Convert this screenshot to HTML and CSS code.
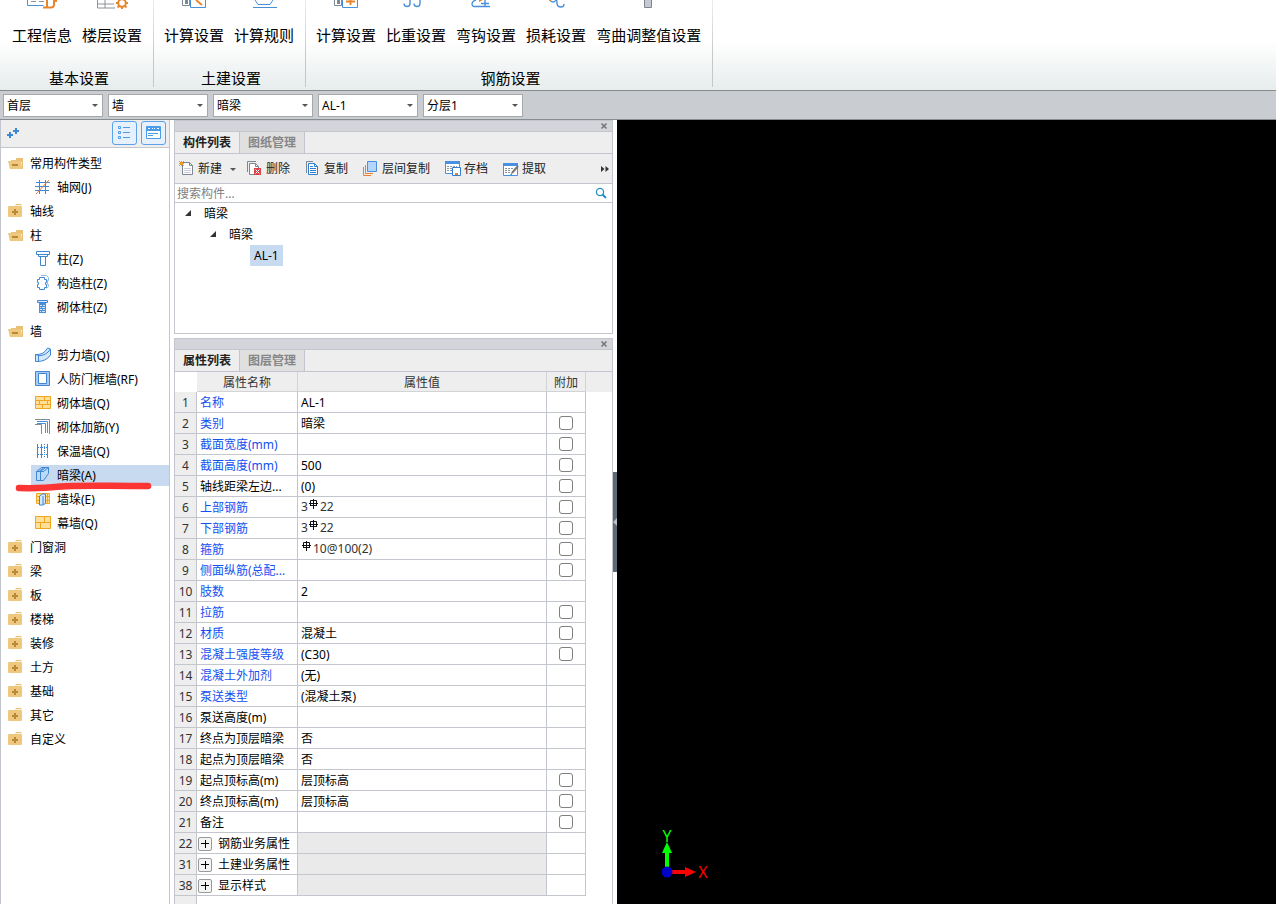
FILE: index.html
```html
<!DOCTYPE html>
<html lang="zh-CN">
<head>
<meta charset="utf-8">
<title>构件定义</title>
<link rel="stylesheet" href="styles.css">
</head>
<body>
<svg class="sprite" aria-hidden="true">
  <symbol id="folder-open" viewBox="0 0 16 14"><path d="M8 2h7v2H8zM3 4h12v9h-1V6H3z" fill="#e9c176"/><path d="M0 5h13l1.500 8H2z" fill="#efc87f"/><path d="M4 8h6v2H4z" fill="#b98a35"/></symbol>
  <symbol id="folder" viewBox="0 0 16 14"><path d="M8 0h5l1 1.300H7z" fill="#e9c176"/><rect x="0" y="2" width="14" height="11" rx="1" fill="#efc87f"/><path d="M6 5h2v2h2v2H8v2H6V9H4V7h2z" fill="#b98a35"/></symbol>
  <symbol id="rebar" viewBox="0 0 11 10"><path d="M5.500 0v10M2.500 1.500h6M2.500 1.500v5M8.500 1.500v5M1 4.500h9M2 6.500h7" fill="none" stroke="#111" stroke-width="1"/></symbol>
  <symbol id="close" viewBox="0 0 8 8"><path d="M1.500 1.500l5 5M6.500 1.500l-5 5" stroke="#777" stroke-width="1.600"/></symbol>
  <symbol id="expander" viewBox="0 0 8 8"><path d="M7 0v6H1z" fill="#333"/></symbol>
</svg>

<header class="ribbon">
  <section class="group">
    <div class="items">
      <button class="tool"><svg viewBox="-17 0 34 10"><path d="M-14.500 0v5.500h16" fill="none" stroke="#4a90d9"/><path d="M-11 1.500h5M-3 1.500h5" stroke="#8a949c"/><path d="M5 0v7M1 7.500h8q3 0 3-3V1h3" fill="none" stroke="#e8862e" stroke-width="2"/></svg>工程信息</button>
      <button class="tool"><svg viewBox="-17 0 34 10"><path d="M-14.500 0v8H3M-14.500 4H2M-7 0v8" fill="none" stroke="#8a949c"/><circle cx="10" cy="3" r="3.800" fill="none" stroke="#e8862e" stroke-width="2"/><path d="M4 3h2M14 3h2M10 7v2M5.500 7.500l2-2M14.500 7.500l-2-2" stroke="#e8862e" stroke-width="2"/></svg>楼层设置</button>
    </div>
    <h2>基本设置</h2>
  </section>
  <section class="group">
    <div class="items">
      <button class="tool"><svg viewBox="-17 0 34 10"><path d="M-11.500 0v5.500h7V0" fill="none" stroke="#7c8790"/><path d="M-9 0h3v4h-3z" fill="#7c8790"/><path d="M-3.500 0v7.500h15V0" fill="#fff" stroke="#4a90d9"/><path d="M2 0l6 5" stroke="#e8862e" stroke-width="2"/></svg>计算设置</button>
      <button class="tool"><svg viewBox="-17 0 34 10"><path d="M-9 0l3 4.500H6L9 0M-11 7.500h24" fill="none" stroke="#4a90d9"/></svg>计算规则</button>
    </div>
    <h2>土建设置</h2>
  </section>
  <section class="group">
    <div class="items">
      <button class="tool"><svg viewBox="-17 0 34 10"><path d="M-11.500 0v5.500h7V0" fill="none" stroke="#7c8790"/><path d="M-9 0h3v4h-3z" fill="#7c8790"/><path d="M-3.500 0v7.500h15V0" fill="#fff" stroke="#4a90d9"/><path d="M0 1.500h9M4.500 0v5" stroke="#e8862e" stroke-width="2"/></svg>计算设置</button>
      <button class="tool"><svg viewBox="-17 0 34 10"><path d="M-6 0v3.500q0 3-3 3t-3-3M4 0v3.500q0 3-3 3t-3-3" fill="none" stroke="#4a90d9" stroke-width="1.400"/></svg>比重设置</button>
      <button class="tool"><svg viewBox="-17 0 34 10"><path d="M-10 0q-4 1-4 4t4 2.500H4M-5 3.500h8M-1 0v7" fill="none" stroke="#4a90d9" stroke-width="1.400"/><path d="M-7 0h4l-4 2z" fill="#e8862e"/></svg>弯钩设置</button>
      <button class="tool"><svg viewBox="-17 0 34 10"><path d="M-6 0q1 2 3 2t3-2q1 0 1 3 0 4 4 4 3 0 3-3" fill="none" stroke="#4a90d9" stroke-width="1.400"/><path d="M-7 0h2v1h-2z" fill="#e8862e"/></svg>损耗设置</button>
      <button class="tool"><svg viewBox="-17 0 34 10"><path d="M-4.500 0v7.500h7V0" fill="#c5cad0" stroke="#7c8790"/></svg>弯曲调整值设置</button>
    </div>
    <h2>钢筋设置</h2>
  </section>
</header>

<nav class="selectors">
  <label class="pick"><select aria-label="楼层"><option>首层</option></select></label>
  <label class="pick"><select aria-label="构件大类"><option>墙</option></select></label>
  <label class="pick"><select aria-label="构件类型"><option>暗梁</option></select></label>
  <label class="pick"><select aria-label="构件名称"><option>AL-1</option></select></label>
  <label class="pick"><select aria-label="分层"><option>分层1</option></select></label>
</nav>

<main class="workspace">
  <aside class="sidebar">
    <div class="side-head">
      <button class="add" aria-label="添加"><svg viewBox="0 0 14 12"><path d="M1 8h6M4 5v6M7 4h6M10 1v6" stroke="#3f86d4" stroke-width="2"/></svg></button>
      <button class="mode" aria-label="列表"><svg viewBox="0 0 15 14"><path d="M1.500.5h2v2h-2zM1.500 5.500h2v2h-2zM1.500 10.500h2v2h-2z" fill="none" stroke="#4a9be8"/><path d="M6 1.500h7M6 6.500h7M6 11.500h7" stroke="#4a9be8"/></svg></button>
      <button class="mode" aria-label="面板"><svg viewBox="0 0 15 14"><path d="M.5.5h14v12H.5z" fill="#fff" stroke="#4a9be8"/><path d="M1 1h13v4H1z" fill="#4a9be8"/><path d="M2 2.500h2M6 2.500h1M8 2.500h1M11 2.500h2" stroke="#fff"/><path d="M2 7.500h10M2 9.500h5" stroke="#4a9be8"/></svg></button>
    </div>
    <ul class="nav-tree">
      <li><a href="#"><svg><use href="#folder-open"/></svg>常用构件类型</a></li>
      <li class="child"><a href="#"><svg viewBox="0 0 16 16"><path d="M1 3.500h14M0 7.500h14M0 11.500h14M4.500 1v14M10.500 1v14" stroke="#3f86d4"/><path d="M1 15L14 1" stroke="#e07b39"/></svg>轴网(J)</a></li>
      <li><a href="#"><svg><use href="#folder"/></svg>轴线</a></li>
      <li><a href="#"><svg><use href="#folder-open"/></svg>柱</a></li>
      <li class="child"><a href="#"><svg viewBox="0 0 16 16"><path d="M1.500.5h13v3h-13zM3.500 3.500v2h9v-2M5.500 5.500v9h5v-9" fill="#fff" stroke="#3f86d4"/></svg>柱(Z)</a></li>
      <li class="child"><a href="#"><svg viewBox="0 0 16 16"><path d="M6 .5h5.500l2 2v3h-1v4h1v2l-2 2" fill="none" stroke="#8fbbe8"/><path d="M4.500 4.500v-2h5v2h2v3h-1v2h1v3h-2v2h-5v-2h-2v-3h1v-2h-1v-3z" fill="#fff" stroke="#3f86d4"/></svg>构造柱(Z)</a></li>
      <li class="child"><a href="#"><svg viewBox="0 0 16 16"><path d="M2.500 1.500h10v2h-10z" fill="#dbeafa" stroke="#3f86d4"/><path d="M4 4h7v10H4z" fill="#4c8fda"/><path d="M5 6.500h2M8 6.500h2M5 8.500h1M7 8.500h3M5 10.500h2M8 10.500h2M5 12.500h1M7 12.500h3" stroke="#cfe2f6"/></svg>砌体柱(Z)</a></li>
      <li><a href="#"><svg><use href="#folder-open"/></svg>墙</a></li>
      <li class="child"><a href="#"><svg viewBox="0 0 16 16"><path d="M.5 7.500Q9 8 12.500 1l3 1v6Q11 15 .5 14.500z" fill="#d6e8fb" stroke="#3f86d4"/><path d="M.5 7.500l3 1Q11 9 15.500 2M3.500 8.500v6" fill="none" stroke="#3f86d4"/></svg>剪力墙(Q)</a></li>
      <li class="child"><a href="#"><svg viewBox="0 0 16 16"><path d="M.5.5h14v14H.5z" fill="#a9cbf3" stroke="#3f86d4"/><path d="M3.500 2.500h8v10h-8z" fill="#fff" stroke="#3f86d4"/></svg>人防门框墙(RF)</a></li>
      <li class="child"><a href="#"><svg viewBox="0 0 16 16"><path d="M.5 1.500h15v12H.5z" fill="#ffe09b" stroke="#f2a51f"/><path d="M0 5.500h16M0 9.500h16M9.500 2v4M4.500 6v4M12.500 6v4M7.500 10v4" stroke="#f2a51f"/></svg>砌体墙(Q)</a></li>
      <li class="child"><a href="#"><svg viewBox="0 0 16 16"><path d="M0 .5h14.500V15M0 5.500h6.500V15" fill="none" stroke="#858b91"/><path d="M2 2.500h10.500V14M2 4.500h8.500V14" fill="none" stroke="#4c8fda"/></svg>砌体加筋(Y)</a></li>
      <li class="child"><a href="#"><svg viewBox="0 0 16 16"><path d="M2.500 1v14M6.500 1v14M12.500 1v14" stroke="#3f86d4"/><path d="M3 4.500h9M3 11.500h9M9.500 1v14" stroke="#3f86d4" stroke-dasharray="1 1"/></svg>保温墙(Q)</a></li>
      <li class="child selected"><a href="#"><svg viewBox="0 0 16 16"><path d="M1.500 4.500l5-4h7v6l-5 7h-7z" fill="#bcd9f7" stroke="#3f86d4"/><path d="M1.500 4.500h7l5-4M4 4.500l5-4M5.500 4.500v9M5.500 4.500l5-4" fill="none" stroke="#3f86d4"/></svg>暗梁(A)</a>
        <svg class="mark" viewBox="0 0 138 10" aria-hidden="true"><path d="M4 6C20 6.500 32 6 46 4.500S90 4 133 4" fill="none" stroke="#fb3434" stroke-width="6.500" stroke-linecap="round"/></svg></li>
      <li class="child"><a href="#"><svg viewBox="0 0 16 16"><path d="M1.500 2.500h13v10h-13z" fill="#ffe09b" stroke="#f2a51f"/><path d="M1 5.500h14M1 9.500h14M12.500 2v10" stroke="#f2a51f"/><path d="M4.500 5l3-2h3v9l-2 2h-4z" fill="#d6e8fb" stroke="#3f86d4"/><path d="M8 5v9" stroke="#3f86d4"/></svg>墙垛(E)</a></li>
      <li class="child"><a href="#"><svg viewBox="0 0 16 16"><path d="M.5 1.500h15v12H.5z" fill="#ffe09b" stroke="#f2a51f"/><path d="M0 7.500h16M9.500 2v5M5.500 8v5" stroke="#f2a51f"/></svg>幕墙(Q)</a></li>
      <li><a href="#"><svg><use href="#folder"/></svg>门窗洞</a></li>
      <li><a href="#"><svg><use href="#folder"/></svg>梁</a></li>
      <li><a href="#"><svg><use href="#folder"/></svg>板</a></li>
      <li><a href="#"><svg><use href="#folder"/></svg>楼梯</a></li>
      <li><a href="#"><svg><use href="#folder"/></svg>装修</a></li>
      <li><a href="#"><svg><use href="#folder"/></svg>土方</a></li>
      <li><a href="#"><svg><use href="#folder"/></svg>基础</a></li>
      <li><a href="#"><svg><use href="#folder"/></svg>其它</a></li>
      <li><a href="#"><svg><use href="#folder"/></svg>自定义</a></li>
    </ul>
  </aside>

  <div class="panels">
    <section class="panel list-panel">
      <div class="strip"><button aria-label="关闭构件列表"><svg><use href="#close"/></svg></button></div>
      <div class="tabs"><button class="tab active">构件列表</button><button class="tab">图纸管理</button></div>
      <div class="toolbar">
        <button><svg viewBox="0 0 16 16"><path d="M3.500 1.500h7l3 3v9h-10z" fill="#fff" stroke="#7c8790"/><path d="M10.500 1.500v3h3" fill="none" stroke="#7c8790"/><path d="M5 7.500h7M5 9.500h7M5 11.500h7" stroke="#ccd"/><path d="M2.500 0v5M0 2.500h5M0 0l5 5M5 0L0 5" stroke="#f2961f"/></svg>新建<i class="arrow"></i></button>
        <button><svg viewBox="0 0 16 16"><path d="M.5 11V.5H9" fill="none" stroke="#7c8790"/><path d="M2.500 2.500h6l3 3v8h-9z" fill="#fff" stroke="#7c8790"/><path d="M8.500 2.500v3h3" fill="none" stroke="#7c8790"/><path d="M7 7h7v7H7z" fill="#d9444b"/><path d="M8.500 8.500l4 4M12.500 8.500l-4 4" stroke="#fff"/></svg>删除</button>
        <button><svg viewBox="0 0 16 16"><path d="M1.500 12V.5H8" fill="none" stroke="#7c8790"/><path d="M3.500 2.500h6l3 3v8h-9z" fill="#fff" stroke="#2f7fd0"/><path d="M9.500 2.500v3h3M5 5.500h3M5 7.500h6M5 9.500h6M5 11.500h6" fill="none" stroke="#2f7fd0"/></svg>复制</button>
        <button><svg viewBox="0 0 16 16"><path d="M.5 6v8.500H8" fill="none" stroke="#ed7d31"/><path d="M2.500 4v8.500H10" fill="none" stroke="#ed7d31"/><path d="M4.500.5h9v10h-9z" fill="#b6d5fa" stroke="#4a90e0"/></svg>层间复制</button>
        <button><svg viewBox="0 0 16 16"><path d="M.5.5h14v12H.5z" fill="#fff" stroke="#4a90e0"/><path d="M0 0h15v3H0z" fill="#4a90e0"/><path d="M2 5.500h10M2 7.500h5M2 9.500h5" stroke="#8a949c" stroke-dasharray="2 1"/><path d="M7.500 6.500h8v8h-8z" fill="#fff" stroke="#2f7fd0"/><path d="M10 12h3v2h-3z" fill="#ed7d31"/></svg>存档</button>
        <button><svg viewBox="0 0 16 16"><path d="M.5 2.500h14v12H.5z" fill="#fff" stroke="#4a90e0"/><path d="M0 2h15v3H0z" fill="#4a90e0"/><path d="M2 7.500h8M2 9.500h6M2 11.500h5" stroke="#8a949c" stroke-dasharray="2 1"/><path d="M15 5l-6 7" stroke="#777" stroke-width="2"/><path d="M9 11l-2 3h2z" fill="#20b5c9"/></svg>提取</button>
        <button class="more" aria-label="更多"><svg viewBox="0 0 8 6"><path d="M0 0l3.500 3L0 6zM4.500 0L8 3 4.500 6z" fill="#333"/></svg></button>
      </div>
      <div class="search"><input type="text" aria-label="搜索构件" placeholder="搜索构件..."><button aria-label="搜索"><svg viewBox="0 0 12 12"><circle cx="5" cy="5" r="3.600" fill="none" stroke="#2a8cc4" stroke-width="1.300"/><path d="M7.500 7.500L11 11" stroke="#2a8cc4" stroke-width="2"/></svg></button></div>
      <ul class="items-tree">
        <li class="lv1"><svg><use href="#expander"/></svg><span>暗梁</span></li>
        <li class="lv2"><svg><use href="#expander"/></svg><span>暗梁</span></li>
        <li class="lv3"><span class="current">AL-1</span></li>
      </ul>
    </section>

    <section class="panel props-panel">
      <div class="strip"><button aria-label="关闭属性列表"><svg><use href="#close"/></svg></button></div>
      <div class="tabs"><button class="tab active">属性列表</button><button class="tab">图层管理</button></div>
      <table class="props">
        <colgroup><col class="c-num"><col class="c-name"><col><col class="c-add"><col class="c-rest"></colgroup>
        <thead><tr><td></td><th>属性名称</th><th>属性值</th><th>附加</th><td></td></tr></thead>
        <tbody>
          <tr><th>1</th><td class="key">名称</td><td>AL-1</td><td></td></tr>
          <tr><th>2</th><td class="key">类别</td><td>暗梁</td><td><input type="checkbox" aria-label="附加 类别"></td></tr>
          <tr><th>3</th><td class="key">截面宽度(mm)</td><td></td><td><input type="checkbox" aria-label="附加 截面宽度"></td></tr>
          <tr><th>4</th><td class="key">截面高度(mm)</td><td>500</td><td><input type="checkbox" aria-label="附加 截面高度"></td></tr>
          <tr><th>5</th><td>轴线距梁左边...</td><td>(0)</td><td><input type="checkbox" aria-label="附加 轴线距梁左边"></td></tr>
          <tr><th>6</th><td class="key">上部钢筋</td><td class="steel">3<svg><use href="#rebar"/></svg>22</td><td><input type="checkbox" aria-label="附加 上部钢筋"></td></tr>
          <tr><th>7</th><td class="key">下部钢筋</td><td class="steel">3<svg><use href="#rebar"/></svg>22</td><td><input type="checkbox" aria-label="附加 下部钢筋"></td></tr>
          <tr><th>8</th><td class="key">箍筋</td><td class="steel"><svg><use href="#rebar"/></svg>10@100(2)</td><td><input type="checkbox" aria-label="附加 箍筋"></td></tr>
          <tr><th>9</th><td class="key">侧面纵筋(总配...</td><td></td><td><input type="checkbox" aria-label="附加 侧面纵筋"></td></tr>
          <tr><th>10</th><td class="key">肢数</td><td>2</td><td></td></tr>
          <tr><th>11</th><td class="key">拉筋</td><td></td><td><input type="checkbox" aria-label="附加 拉筋"></td></tr>
          <tr><th>12</th><td class="key">材质</td><td>混凝土</td><td><input type="checkbox" aria-label="附加 材质"></td></tr>
          <tr><th>13</th><td class="key">混凝土强度等级</td><td>(C30)</td><td><input type="checkbox" aria-label="附加 混凝土强度等级"></td></tr>
          <tr><th>14</th><td class="key">混凝土外加剂</td><td>(无)</td><td></td></tr>
          <tr><th>15</th><td class="key">泵送类型</td><td>(混凝土泵)</td><td></td></tr>
          <tr><th>16</th><td>泵送高度(m)</td><td></td><td></td></tr>
          <tr><th>17</th><td>终点为顶层暗梁</td><td>否</td><td></td></tr>
          <tr><th>18</th><td>起点为顶层暗梁</td><td>否</td><td></td></tr>
          <tr><th>19</th><td>起点顶标高(m)</td><td>层顶标高</td><td><input type="checkbox" aria-label="附加 起点顶标高"></td></tr>
          <tr><th>20</th><td>终点顶标高(m)</td><td>层顶标高</td><td><input type="checkbox" aria-label="附加 终点顶标高"></td></tr>
          <tr><th>21</th><td>备注</td><td></td><td><input type="checkbox" aria-label="附加 备注"></td></tr>
          <tr class="fold"><th>22</th><td><button aria-label="展开"></button>钢筋业务属性</td><td></td><td></td></tr>
          <tr class="fold"><th>31</th><td><button aria-label="展开"></button>土建业务属性</td><td></td><td></td></tr>
          <tr class="fold"><th>38</th><td><button aria-label="展开"></button>显示样式</td><td></td><td></td></tr>
        </tbody>
        <tfoot><tr><th></th><td colspan="4"></td></tr></tfoot>
      </table>
    </section>
  </div>

  <div class="splitter"><button aria-label="收起面板"><svg viewBox="0 0 4 8"><path d="M4 0v8L0 4z" fill="#b9c0c6"/></svg></button></div>

  <section class="viewport">
    <svg class="axes" viewBox="0 0 60 60">
      <path d="M10 48V28" stroke="#0f0" stroke-width="4"/><path d="M10 18l5 11H5z" fill="#0f0"/>
      <path d="M10 48h20" stroke="#f00" stroke-width="4"/><path d="M39 48l-11-5v10z" fill="#f00"/>
      <circle cx="10" cy="48" r="5.500" fill="#0000c8"/>
      <text x="10" y="18" fill="#0f0">Y</text><text x="46" y="54" fill="#f00">X</text>
    </svg>
  </section>
</main>
</body>
</html>
```

FILE: styles.css
```css
* { box-sizing: border-box; }

body {
  margin: 0;
  height: 100vh;
  display: flex;
  flex-direction: column;
  overflow: hidden;
  background: #fff;
  color: #000;
  font: 12px/20px "Noto Sans", "Noto Sans CJK SC", sans-serif;
}

button {
  border: 0;
  padding: 0;
  background: none;
  color: inherit;
  font: inherit;
}

svg { display: block; flex: none; }
ul { list-style: none; margin: 0; padding: 0; }
a { color: inherit; text-decoration: none; }
.sprite { position: absolute; width: 0; height: 0; }

/* ribbon */
.ribbon {
  flex: none;
  display: flex;
  height: 91px;
  padding-left: 2px;
  border-bottom: 1px solid #878c8e;
  background: linear-gradient(#fff 45%, #e7ecec);
}

.group {
  padding: 0 11px 0 10px;
  border-right: 1px solid;
  border-image: linear-gradient(#eee, #c4c8ca 60%, #c4c8ca 96%, transparent 96%) 1;
  font-size: 15px;
}

.items { display: flex; gap: 10px; }

.tool {
  display: flex;
  flex-direction: column;
  align-items: center;
  gap: 14px;
  line-height: 22px;
  white-space: nowrap;
}

.tool svg { width: 34px; height: 10px; }

.group h2 {
  margin: 21px 0 0;
  padding-left: 4px;
  text-align: center;
  font: inherit;
  line-height: 22px;
}

/* quick selectors */
.selectors {
  flex: none;
  display: flex;
  gap: 5px;
  height: 29px;
  padding: 3px;
  border-bottom: 1px solid #878c8e;
  background: #c9ccd0;
}

.pick { position: relative; width: 100px; height: 23px; }

.pick select {
  width: 100%;
  height: 100%;
  padding: 0 3px;
  border: 1px solid #a6a8ab;
  border-radius: 0;
  background: #fff;
  color: #000;
  font: inherit;
  appearance: none;
}

.pick::after {
  content: "";
  position: absolute;
  top: 10px;
  right: 5px;
  border: 3px solid transparent;
  border-top-color: #555;
  border-bottom: 0;
}

/* workspace */
.workspace { flex: 1; min-height: 0; display: flex; }

.sidebar {
  flex: none;
  width: 170px;
  border: solid #c3c6cc;
  border-width: 0 1px;
}

.side-head {
  display: flex;
  align-items: center;
  gap: 4px;
  height: 28px;
  padding: 0 3px 1px 5px;
  border-bottom: 1px solid #c3c6cc;
  background: #eee;
}

.add { margin-right: auto; }
.add svg { width: 14px; height: 12px; }

.mode {
  display: grid;
  place-items: center;
  width: 25px;
  height: 24px;
  border: 1px solid #5aa2ea;
  border-radius: 3px;
  background: #e6f1fd;
}

.mode svg { width: 15px; height: 14px; }

.nav-tree { padding-top: 3px; }
.nav-tree li { position: relative; height: 24px; padding: 2px 0 1px; }

.nav-tree a {
  display: flex;
  align-items: center;
  gap: 6px;
  height: 21px;
  padding-left: 7px;
}

.nav-tree a svg { width: 16px; height: 14px; margin-bottom: 1px; }
.nav-tree .child { padding-left: 30px; }
.nav-tree .child a { padding-left: 4px; }
.nav-tree .child a svg { height: 16px; }
.nav-tree .selected a { background: #c8daf0; }

.mark {
  position: absolute;
  z-index: 1;
  top: 19px;
  left: 14px;
  width: 138px;
  height: 10px;
}

.panels {
  flex: none;
  width: 439px;
  margin-left: 4px;
  display: flex;
  flex-direction: column;
  gap: 4px;
}

.panel {
  border: 1px solid #c3c6cc;
  background: #fff;
  overflow: hidden;
}

.list-panel { flex: none; }
.props-panel { flex: 1; min-height: 0; border-bottom: 0; }

.strip {
  display: flex;
  justify-content: flex-end;
  align-items: center;
  height: 11px;
  padding-right: 4px;
  border-bottom: 1px solid #c3c6cc;
  background: #d4d5db;
}

.strip svg { width: 8px; height: 8px; }

.tabs {
  display: flex;
  height: 22px;
  border-bottom: 1px solid #c3c6cc;
  background: #eee;
}

.tab {
  padding: 0 8px;
  border-right: 1px solid #c3c6cc;
  background: #e0e0e0;
  color: #868686;
  font-weight: bold;
}

.tab.active { background: #eee; color: #222; }

.toolbar {
  display: flex;
  align-items: center;
  gap: 15px;
  height: 30px;
  padding: 0 3px 0 4px;
  border-bottom: 1px solid #c3c6cc;
  background: #eee;
  color: #222;
}

.toolbar button { display: flex; align-items: center; gap: 3px; white-space: nowrap; }
.toolbar svg { width: 16px; height: 16px; }

.arrow {
  margin: 2px -4px 0 5px;
  border: 3px solid transparent;
  border-top-color: #555;
  border-bottom: 0;
}

.toolbar .more { margin-left: auto; }
.toolbar .more svg { width: 8px; height: 6px; }

.search {
  display: flex;
  align-items: center;
  height: 19px;
  padding-right: 5px;
  border-bottom: 1px solid #c3c6cc;
}

.search input {
  flex: 1;
  height: 18px;
  padding: 2px 2px 0;
  border: 0;
  outline: 0;
  font: inherit;
}

.search input::placeholder { color: #808080; }
.search svg { width: 12px; height: 12px; }

.items-tree { height: 130px; }
.items-tree li { display: flex; align-items: center; gap: 12px; height: 21px; }
.items-tree svg { width: 8px; height: 8px; }
.lv1 { padding-left: 9px; }
.lv2 { padding-left: 34px; }
.lv3 { padding-left: 75px; }
.current { padding: 0 4px; line-height: 21px; background: #c8daf0; }

/* property grid */
.props {
  width: 100%;
  table-layout: fixed;
  border-collapse: separate;
  border-spacing: 0;
  line-height: 18px;
}

.c-num { width: 22px; }
.c-name { width: 101px; }
.c-add { width: 39px; }
.c-rest { width: 26px; }

.props th, .props td {
  height: 21px;
  padding: 2px 3px 0;
  border: solid #c3c6cc;
  border-width: 0 1px 1px 0;
  font-weight: normal;
  text-align: left;
  white-space: nowrap;
  overflow: hidden;
}

.props th { padding: 2px 0 0; background: #eee; color: #333; text-align: center; }
.props thead { line-height: 16px; }
.props thead th, .props thead td { height: 20px; padding-top: 3px; border-color: #d2d3d6; }
.props thead td { border: 0; }
.props thead td:last-child { background: #eee; }
.props tbody td:nth-child(4) { padding: 0 1px 0 0; }
.props .key { color: #1450f0; }
.props tfoot td { border: 0; }

.props input {
  display: block;
  width: 14px;
  height: 14px;
  margin: 0 auto;
  border: 1px solid #808080;
  border-radius: 3px;
  background: #fff;
  appearance: none;
}

.props .steel { color: #333; padding-top: 0; }
.steel svg { display: inline-block; width: 11px; height: 10px; margin: 0 1px 2px 0; vertical-align: 0; }

.fold td:nth-child(3) { background: #eaeaea; }
.props .fold td:nth-child(2) { padding-left: 1px; }

.fold button {
  display: inline-block;
  width: 14px;
  height: 14px;
  margin: 0 6px 2px 0;
  border: 1px solid #999;
  border-radius: 2px;
  background:
    linear-gradient(#000, #000) center / 8px 1px no-repeat,
    linear-gradient(#000, #000) center / 1px 8px no-repeat,
    #f4f4f4;
  vertical-align: middle;
}

.splitter {
  flex: none;
  display: flex;
  align-items: center;
  width: 4px;
}

.splitter button {
  display: grid;
  place-items: center;
  width: 4px;
  height: 100px;
  margin-bottom: -20px;
  background: #5d6973;
}

.splitter svg { width: 4px; height: 8px; }

.viewport { position: relative; flex: 1; min-width: 0; background: #000; }

.axes {
  position: absolute;
  left: 40px;
  bottom: 20px;
  width: 60px;
  height: 60px;
  overflow: visible;
  font-size: 16px;
  text-anchor: middle;
}
```
